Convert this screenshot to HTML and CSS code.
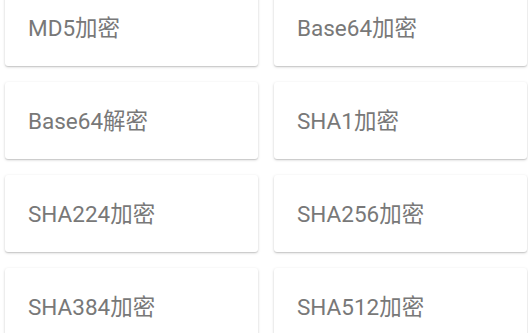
FILE: index.html
```html
<!DOCTYPE html>
<html>
<head>
<meta charset="utf-8">
<link rel="stylesheet" href="styles.css">
</head>
<body>
<div class="grid">
  <div class="card">MD5加密</div>
  <div class="card">Base64加密</div>
  <div class="card">Base64解密</div>
  <div class="card">SHA1加密</div>
  <div class="card">SHA224加密</div>
  <div class="card">SHA256加密</div>
  <div class="card">SHA384加密</div>
  <div class="card">SHA512加密</div>
</div>
</body>
</html>
```
FILE: styles.css
```css
html, body {
  margin: 0;
  background: #ffffff;
  overflow: hidden;
}
.grid {
  display: grid;
  grid-template-columns: 253px 253px;
  column-gap: 16px;
  row-gap: 16px;
  padding: 0 1px 0 5px;
  margin-top: -11px;
}
.card {
  height: 77px;
  box-sizing: border-box;
  background: #ffffff;
  border-radius: 3px;
  box-shadow: 0 1px 3px rgba(0,0,0,0.18), 0 1px 1px rgba(0,0,0,0.10);
  display: flex;
  align-items: center;
  padding: 0 0 3px 23px;
  font-family: Roboto, "Noto Sans CJK SC", sans-serif;
  font-size: 22.5px;
  color: #787878;
}
```
